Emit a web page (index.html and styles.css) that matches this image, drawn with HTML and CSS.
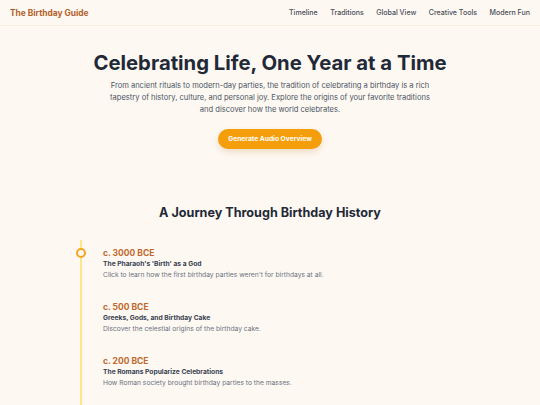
FILE: index.html
```html
<!DOCTYPE html>
<html lang="en">
<head>
<meta charset="utf-8">
<title>The Birthday Guide</title>
<link rel="stylesheet" href="styles.css">
</head>
<body>
<header class="nav">
  <div class="logo">The Birthday Guide</div>
  <nav class="links">
    <a href="#">Timeline</a>
    <a href="#">Traditions</a>
    <a href="#">Global View</a>
    <a href="#">Creative Tools</a>
    <a href="#">Modern Fun</a>
  </nav>
</header>
<section class="hero">
  <h1>Celebrating Life, One Year at a Time</h1>
  <p>From ancient rituals to modern-day parties, the tradition of celebrating a birthday is a rich tapestry of history, culture, and personal joy. Explore the origins of your favorite traditions and discover how the world celebrates.</p>
  <button class="btn">Generate Audio Overview</button>
</section>
<section class="history">
  <h2>A Journey Through Birthday History</h2>
  <div class="timeline">
    <div class="item active">
      <span class="dot"></span>
      <div class="date">c. 3000 BCE</div>
      <div class="title">The Pharaoh's 'Birth' as a God</div>
      <div class="desc">Click to learn how the first birthday parties weren't for birthdays at all.</div>
    </div>
    <div class="item">
      <div class="date">c. 500 BCE</div>
      <div class="title">Greeks, Gods, and Birthday Cake</div>
      <div class="desc">Discover the celestial origins of the birthday cake.</div>
    </div>
    <div class="item">
      <div class="date">c. 200 BCE</div>
      <div class="title">The Romans Popularize Celebrations</div>
      <div class="desc">How Roman society brought birthday parties to the masses.</div>
    </div>
  </div>
</section>
</body>
</html>
```
FILE: styles.css
```css
* { box-sizing: border-box; }
html, body { margin: 0; padding: 0; }
body {
  background: #fdf8f2;
  font-family: Inter, "Noto Sans", sans-serif;
  color: #1f2937;
  overflow: hidden;
}
.nav {
  height: 26px;
  display: flex;
  align-items: center;
  justify-content: space-between;
  padding: 0 10px;
  border-bottom: 1px solid #f7eedf;
}
.logo {
  font-size: 8.4px;
  font-weight: 700;
  color: #b4602a;
}
.links {
  display: flex;
  gap: 12.5px;
}
.links a {
  font-size: 7.05px;
  font-weight: 500;
  color: #4b4f58;
  text-decoration: none;
}
.hero {
  text-align: center;
  padding-top: 23px;
  display: flex;
  flex-direction: column;
  align-items: center;
}
.hero h1 {
  margin: 0;
  font-size: 20.3px;
  font-weight: 700;
  color: #1f2937;
  line-height: 28px;
}
.hero p {
  margin: 3px 0 0;
  width: 330px;
  font-size: 7.55px;
  line-height: 12px;
  color: #4b5563;
}
.btn {
  margin-top: 13px;
  height: 20px;
  padding: 0 10px;
  border: none;
  border-radius: 10px;
  background: #f59e0b;
  color: #fff;
  font-family: Inter, sans-serif;
  font-size: 6.7px;
  font-weight: 700;
  box-shadow: 0 3px 6px rgba(180, 110, 20, 0.2);
}
.history {
  padding-top: 55px;
}
.history h2 {
  margin: 0;
  text-align: center;
  font-size: 12.6px;
  font-weight: 700;
  line-height: 18px;
  color: #1f2937;
}
.timeline {
  margin: 18px 0 0 80px;
  border-left: 2px solid #fde68a;
  padding: 7px 0 40px 21px;
}
.item {
  position: relative;
  height: 54px;
}
.dot {
  position: absolute;
  left: -27px;
  top: 1px;
  width: 10px;
  height: 10px;
  border-radius: 50%;
  border: 2px solid #f5a524;
  background: #fdf8f2;
}
.date {
  font-size: 8.5px;
  font-weight: 700;
  color: #c0692d;
  line-height: 12px;
}
.title {
  font-size: 6.7px;
  font-weight: 700;
  color: #374151;
  line-height: 11px;
}
.desc {
  font-size: 6.7px;
  color: #6b7280;
  line-height: 11px;
}
```
